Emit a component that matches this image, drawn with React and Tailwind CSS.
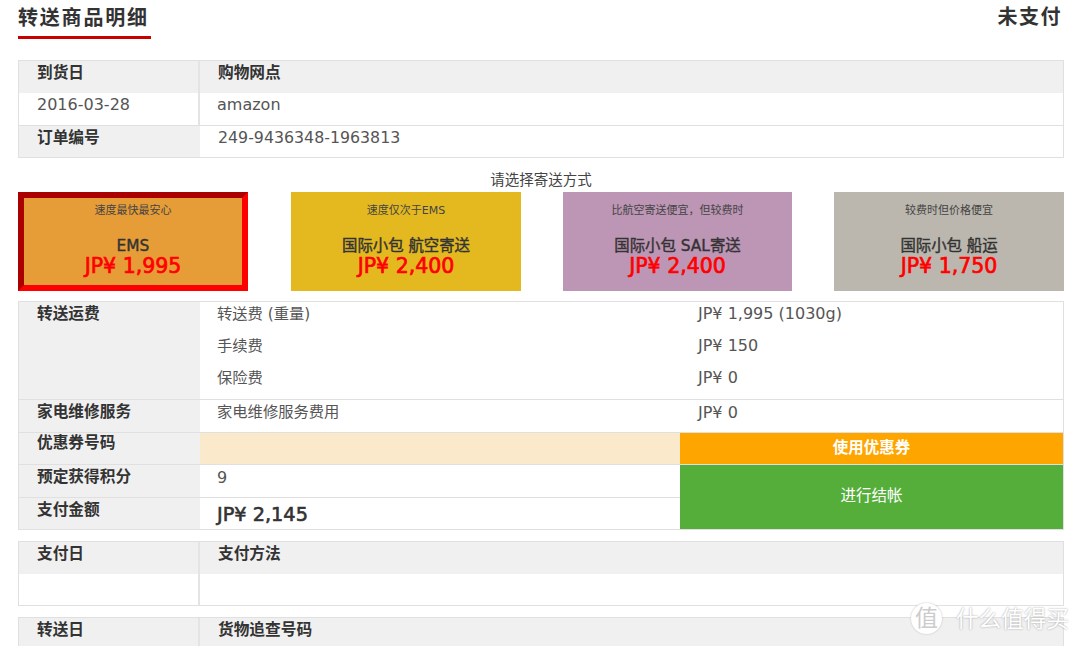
import React from "react";

const font = { fontFamily: '"DejaVu Sans", "Noto Sans CJK SC", sans-serif' };

const cards = [
  { note: "速度最快最安心", name: "EMS", price: "JP¥ 1,995", cls: "w-[230px] bg-[#e69c37] border-[6px] border-t-[#aa0000] border-l-[#aa0000] border-r-[#ff0000] border-b-[#ff0000] pt-[6px]" },
  { note: "速度仅次于EMS", name: "国际小包 航空寄送", price: "JP¥ 2,400", cls: "ml-[43px] w-[230px] bg-[#e4b920] pt-[12px]" },
  { note: "比航空寄送便宜，但较费时", name: "国际小包 SAL寄送", price: "JP¥ 2,400", cls: "ml-[42px] w-[229px] bg-[#bd95b5] pt-[12px]" },
  { note: "较费时但价格便宜", name: "国际小包 船运", price: "JP¥ 1,750", cls: "ml-[42px] w-[230px] bg-[#bbb7ae] pt-[12px]" },
];

const Label = ({ children, className = "" }) => (
  <div className={`w-[181px] shrink-0 bg-[#f0f0f0] pl-[18px] text-[15.7px] font-bold text-[#333] ${className}`}>{children}</div>
);

// 两列表格, 上面灰色表头, 下面白色内容
const InfoTable = ({ head, value, height = "h-[32px]" }) => (
  <div className="border border-[#e0e0e0] leading-[24px]">
    <div className="flex h-[32px] bg-[#f0f0f0] text-[15.7px] font-bold text-[#333]">
      <div className="w-[181px] shrink-0 border-r-2 border-[#e4e4e4] pl-[18px]">{head[0]}</div>
      <div className="pl-[18px]">{head[1]}</div>
    </div>
    <div className={`flex ${height} bg-white text-[16px] text-[#555]`}>
      <div className="w-[181px] shrink-0 border-r-2 border-[#e4e4e4] pl-[18px]">{value[0]}</div>
      <div className="pl-[17px]">{value[1]}</div>
    </div>
  </div>
);

export default function App() {
  return (
    <div className="relative h-[646px] w-[1080px] overflow-hidden bg-white px-[18px]" style={font}>
      {/* 标题 */}
      <div className="flex items-start justify-between pt-[5px]">
        <h1 className="h-[34px] w-[133px] border-b-[3px] border-[#c80000] text-[20px] font-bold leading-[26px] tracking-[1.8px] text-[#333]">转送商品明细</h1>
        <div className="pt-[1px] text-[20px] font-bold leading-[22px] tracking-[1.5px] text-[#333]">未支付</div>
      </div>

      {/* 订单信息 */}
      <div className="mt-[21px] w-[1046px]">
        <InfoTable head={["到货日", "购物网点"]} value={["2016-03-28", "amazon"]} />
        <div className="flex h-[32px] border border-t-0 border-[#e0e0e0] leading-[24px]">
          <Label>订单编号</Label>
          <div className="pl-[18px] text-[15.8px] text-[#555]">249-9436348-1963813</div>
        </div>
      </div>

      {/* 寄送方式 */}
      <div className="mt-[12px] w-[1046px] text-center text-[14.5px] leading-[20px] text-[#444]">请选择寄送方式</div>
      <div className="mt-[2px] flex w-[1046px]">
        {cards.map((c) => (
          <div key={c.name} className={`box-border h-[99px] shrink-0 text-center ${c.cls}`}>
            <div className="text-[11px] leading-[14px] text-[#444]">{c.note}</div>
            <div className="mt-[18px] text-[15.4px] leading-[20px] text-[#333] [-webkit-text-stroke:0.4px_#333]">{c.name}</div>
            <div className="text-[20.5px] leading-[20px] text-[#ff0000] [-webkit-text-stroke:0.7px_#ff0000]">{c.price}</div>
          </div>
        ))}
      </div>

      {/* 费用明细 */}
      <div className="mt-[10px] w-[1046px] border border-[#e0e0e0] text-[15.3px] leading-[24px] text-[#555]">
        <div className="flex h-[98px] border-b border-[#e0e0e0]">
          <Label>转送运费</Label>
          <div className="flex-1 pl-[17px]">
            {[["转送费 (重量)", "JP¥ 1,995 (1030g)"], ["手续费", "JP¥ 150"], ["保险费", "JP¥ 0"]].map(([a, b]) => (
              <div key={a} className="flex h-[32px]">
                <div className="w-[481px]">{a}</div>
                <div className="text-[16px]">{b}</div>
              </div>
            ))}
          </div>
        </div>
        <div className="flex h-[33px] border-b border-[#e0e0e0]">
          <Label>家电维修服务</Label>
          <div className="w-[480px] pl-[17px]">家电维修服务费用</div>
          <div className="pl-[18px] pt-[1px] text-[16px]">JP¥ 0</div>
        </div>
        <div className="flex h-[32px] border-b border-[#e0e0e0]">
          <Label className="leading-[20px]">优惠券号码</Label>
          <div className="w-[480px] bg-[#fae9cb]" />
          <div className="flex-1 bg-[#ffa500] text-center text-[15.5px] font-bold leading-[30px] text-white">使用优惠券</div>
        </div>
        <div className="flex h-[64px]">
          <div className="w-[661px] shrink-0">
            <div className="flex h-[33px] border-b border-[#e0e0e0]">
              <Label>预定获得积分</Label>
              <div className="pl-[17px] pt-[1px] text-[16px]">9</div>
            </div>
            <div className="flex h-[31px]">
              <Label>支付金额</Label>
              <div className="pl-[17px] pt-[5px] text-[19.3px] text-[#333] [-webkit-text-stroke:0.6px_#333]">JP¥ 2,145</div>
            </div>
          </div>
          <div className="flex flex-1 items-center justify-center bg-[#55ae3a] pb-[2px] text-[15.5px] text-white">进行结帐</div>
        </div>
      </div>

      {/* 支付 / 转送 */}
      <div className="mt-[11px] w-[1046px]">
        <InfoTable head={["支付日", "支付方法"]} value={["", ""]} height="h-[31px]" />
      </div>
      <div className="mt-[11px] w-[1046px]">
        <InfoTable head={["转送日", "货物追查号码"]} value={["", ""]} />
      </div>

      {/* 水印 */}
      <div className="absolute bottom-[12px] left-[911px] flex items-center gap-[14px] text-white [text-shadow:0_0_2px_#999]">
        <div className="flex h-[31px] w-[31px] items-center justify-center rounded-full bg-white text-[23px] text-[#ccc] shadow-[0_0_2px_#bbb] [text-shadow:none]">值</div>
        <div className="text-[22.6px] leading-[28px]">什么值得买</div>
      </div>
    </div>
  );
}
